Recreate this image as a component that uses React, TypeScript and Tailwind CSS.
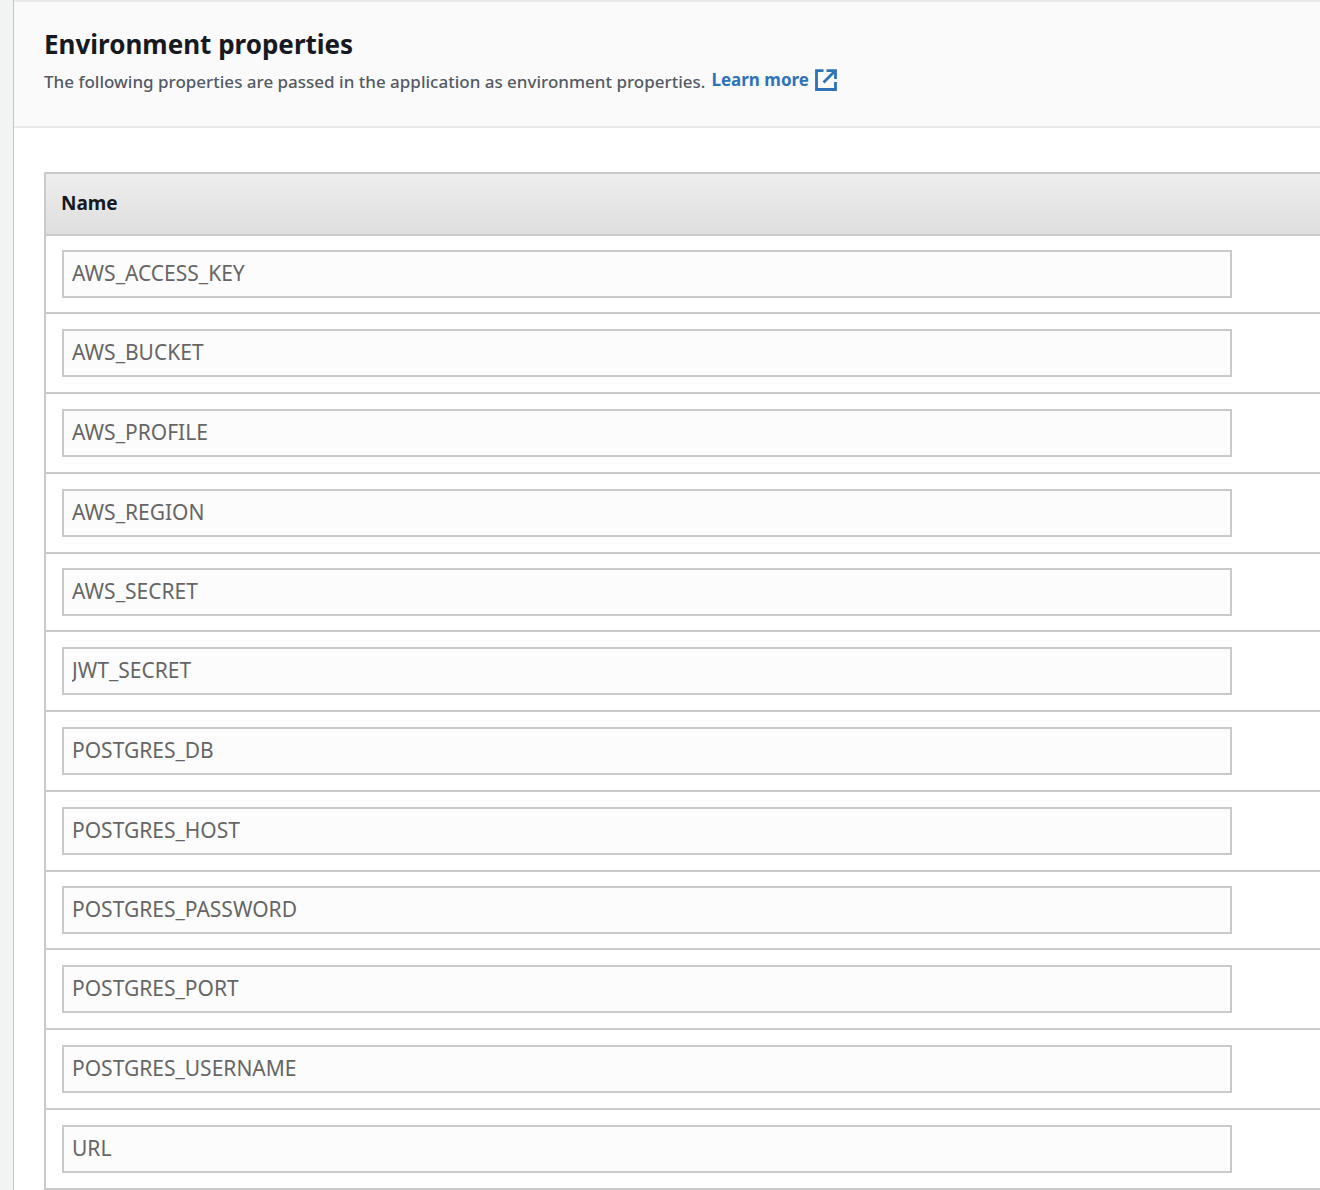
const properties = [
  'AWS_ACCESS_KEY',
  'AWS_BUCKET',
  'AWS_PROFILE',
  'AWS_REGION',
  'AWS_SECRET',
  'JWT_SECRET',
  'POSTGRES_DB',
  'POSTGRES_HOST',
  'POSTGRES_PASSWORD',
  'POSTGRES_PORT',
  'POSTGRES_USERNAME',
  'URL',
];

function ExternalIcon() {
  return (
    <svg viewBox="0 0 22 22" className="size-[22px]" fill="none" stroke="currentColor" strokeWidth="2.8" aria-hidden="true">
      <path d="M8.5 1.6H1.5V20.5H20.5V13" />
      <path d="M11.5 1.6H20.5V10" />
      <path d="M20 2L8.5 13.5" />
    </svg>
  );
}

export default function App() {
  return (
    <div className="min-h-screen overflow-hidden bg-[#f2f4f4] pl-[13px] font-['Noto_Sans',sans-serif]">
      <main className="min-h-screen border-l border-[#c3c7c7] bg-white">
        <header className="border-y-2 border-[#eaeaea] bg-[#fafafa] pt-[22px] pb-[30px] pl-[30px]">
          <h1 className="text-[26px] leading-10 font-bold text-[#16191f]">Environment properties</h1>
          <div className="flex items-center gap-[6px] text-[17px] leading-7">
            <p className="pt-1 font-medium text-[#545b64]">
              The following properties are passed in the application as environment properties.
            </p>
            <a href="#learn-more" className="flex items-center gap-[6px] font-bold text-[#2e73b8]">
              Learn more
              <ExternalIcon />
            </a>
          </div>
        </header>

        <section className="pt-11 pl-[30px]">
          <table className="w-full border-separate border-spacing-0 border-t-2 border-l-2 border-[#cacaca]">
            <thead>
              <tr>
                <th
                  scope="col"
                  className="h-[62px] border-b-2 border-[#cacaca] bg-linear-to-b from-[#eeeeee] to-[#dedede] px-[15px] pb-[2px] text-left text-[19px] font-bold text-[#16191f]"
                >
                  Name
                </th>
              </tr>
            </thead>
            <tbody>
              {properties.map((name) => (
                <tr key={name} className="h-20 nth-[4n+1]:h-[78px]">
                  <td className="border-b-2 border-[#cacaca] py-0 pr-[88px] pl-4 align-middle">
                    <input
                      type="text"
                      readOnly
                      aria-label={`Property name ${name}`}
                      defaultValue={name}
                      className="block h-12 w-full border-2 border-[#cacaca] bg-[#fcfcfc] px-2 pb-[2px] text-[21px] text-[#666666]"
                    />
                  </td>
                </tr>
              ))}
            </tbody>
          </table>
        </section>
      </main>
    </div>
  );
}
